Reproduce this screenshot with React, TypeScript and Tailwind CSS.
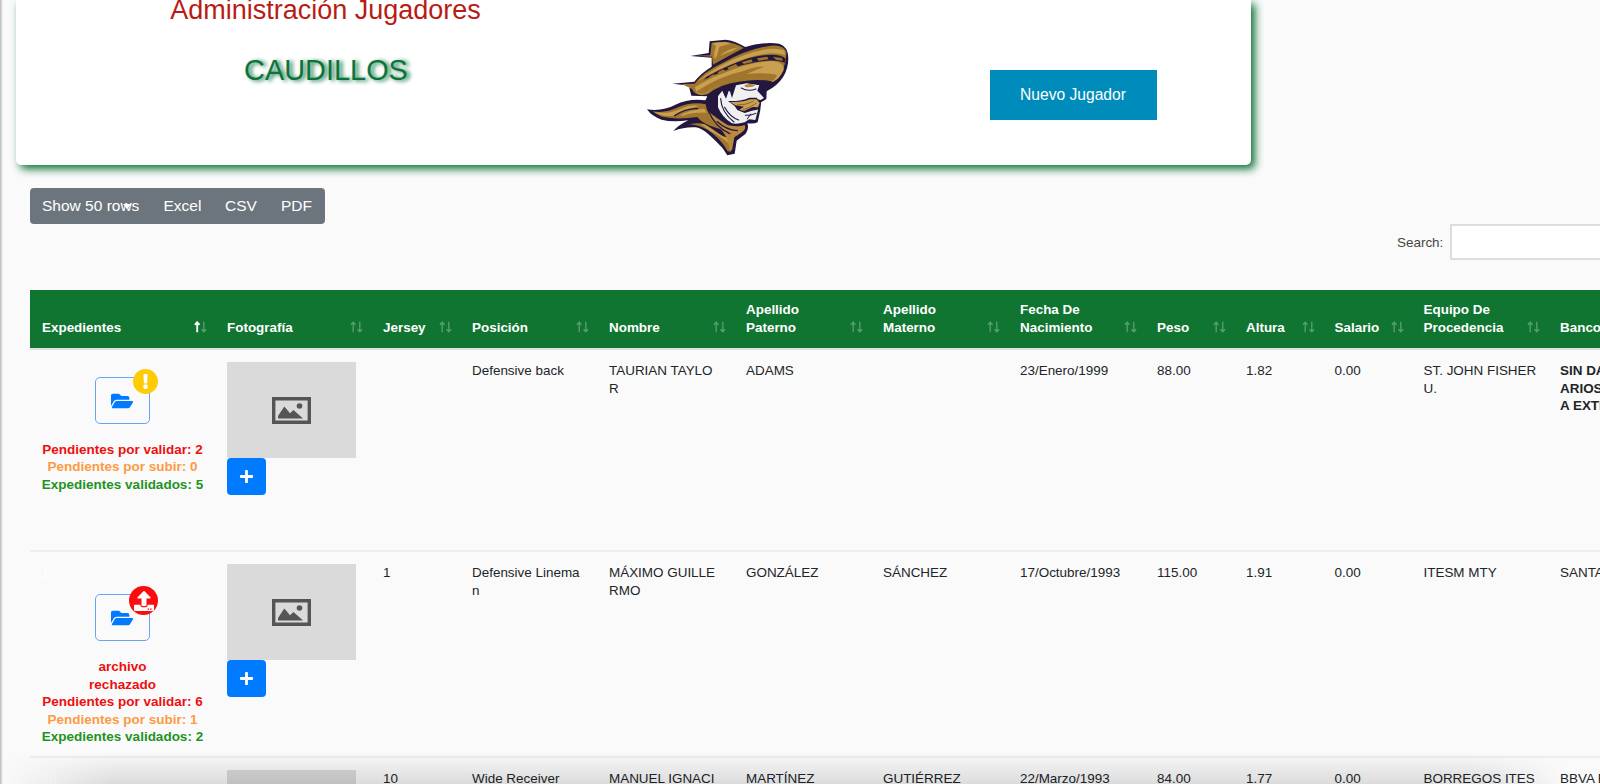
import { ReactNode } from "react";
import { FaExclamation, FaFolderOpen, FaPlus, FaUpload } from "react-icons/fa";

function SombreroLogo() {
  return (
    <svg viewBox="0 0 540 405" className="h-[135px] w-[180px] shrink-0">
      <g strokeLinejoin="round" strokeLinecap="round">
        <path
          fill="#24173f"
          d="M51 238 C85 243 112 236 136 224 C165 209 198 207 226 211 L234 199 L184 197 L178 175 L190 168 L127 161 L193 155 Q212 130 245 110 L245 83 L181 78 L236 69 L239 34 L287 29 Q314 32 346 51 Q398 35 448 41 Q474 49 475 84 Q475 150 410 184 L409 207 L393 217 L391 240 L383 277 Q373 282 352 280 Q358 296 347 311 L320 332 L314 371 L292 376 Q278 351 257 333 C234 310 216 295 197 292 Q164 290 130 303 Q144 286 175 271 Q126 277 95 269 Q65 259 51 238Z"
        />
        <path
          fill="#a0762c"
          d="M68 244 Q106 251 144 232 Q187 213 227 223 Q231 255 256 271 L294 302 Q280 301 240 287 Q214 277 202 261 Q145 269 106 262 Q83 258 68 244Z"
        />
        <path fill="#c9a04f" d="M73 246 Q116 254 153 236 Q181 223 207 227 Q162 241 132 257 Q98 262 73 246Z" />
        <path fill="#c9a04f" d="M150 256 Q182 238 223 236 L231 248 Q188 246 160 257Z" />
        <path fill="#a0762c" d="M178 283 Q202 277 224 282 Q264 307 303 337 L303 365 L293 364 Q272 325 234 300 Q203 284 178 283Z" />
        <path fill="#c9a04f" d="M210 281 Q235 285 262 310 Q280 322 304 325 L304 347 Q275 319 240 303 Q224 290 210 281Z" />
        <path fill="#b98a3b" d="M234 243 Q258 264 294 286 Q327 292 344 285 Q350 297 334 308 L313 322 L306 361 L298 360 Q298 318 260 286 Q240 271 234 243Z" />
        <path fill="none" stroke="#24173f" strokeWidth="4" d="M236 244 Q255 291 299 311 M262 275 Q288 299 322 302 M134 257 Q168 234 203 236" />
        <path
          fill="#f0f0f3"
          d="M264 198 L276 176 L286 202 L292 180 L303 186 L316 164 L350 158 L388 165 L382 182 L402 204 L392 210 L381 208 L386 220 L384 240 L376 270 L358 268 L344 277 Q320 284 306 280 Q276 262 264 232Z"
        />
        <path fill="#24173f" d="M228 212 Q232 182 262 164 L302 152 L410 150 L408 168 L398 182 L392 166 L350 160 L318 166 L306 204 L298 178 L288 206 L277 182 L262 200 L258 232 L240 226Z" />
        <path fill="#b98a3b" d="M343 166 Q358 159 376 165 Q368 174 346 171Z" />
        <path fill="none" stroke="#24173f" strokeWidth="3.5" d="M334 174 Q354 186 378 177 M272 206 Q274 246 312 276 M284 232 Q300 262 326 270" />
        <path fill="#24173f" d="M294 213 Q336 214 358 203 L380 203 L393 219 L388 238 L366 242 L344 249 L322 240 L314 228Z" />
        <path fill="#c9a04f" d="M300 216 Q337 218 360 208 L380 208 L389 219 L384 232 L368 231 L342 243 L328 239 L342 230 L316 226Z" />
        <path fill="none" stroke="#8e6524" strokeWidth="3" d="M322 225 Q348 226 370 214 M340 239 Q362 232 378 220" />
        <path fill="none" stroke="#24173f" strokeWidth="3" d="M346 256 Q362 258 378 250 M352 267 L362 252" />
        <path fill="#a0762c" d="M198 77 L241 76 L245 38 L286 35 Q318 39 341 54 L285 84 L249 104 L246 80Z" />
        <path fill="#c9a04f" d="M247 40 Q278 33 304 40 L268 50 L261 78 L254 88 L252 70 L258 48Z" />
        <path fill="#c9a04f" d="M270 78 Q290 57 326 52 L306 64 L288 70Z" />
        <path
          fill="#a0762c"
          d="M155 162 L194 161 Q220 125 279 98 Q354 56 422 47 Q461 43 469 66 Q471 119 430 155 Q387 145 326 155 Q270 162 233 193 Q198 202 186 177Z"
        />
        <path fill="#c9a04f" d="M195 172 Q236 144 285 128 Q361 95 431 93 Q465 99 461 120 Q449 148 427 156 Q414 142 326 146 Q263 156 229 190 Q199 201 195 172Z" />
        <path fill="#a0762c" d="M200 184 Q268 138 343 122 Q382 108 402 110 Q372 122 350 132 Q397 126 441 134 Q436 149 426 153 Q357 141 309 151 Q262 160 226 190 Q206 194 200 184Z" />
        <path fill="#c9a04f" d="M201 155 Q265 103 343 75 Q421 47 463 61 L465 76 Q422 60 345 86 Q267 114 201 155Z" />
        <path fill="#24173f" d="M230 140 Q332 85 390 77 Q448 68 467 86 L465 98 Q431 86 376 97 Q305 109 222 149Z" />
        <g fill="#a0762c">
          <path d="M236 141 L252 132 L256 137 L242 142Z" />
          <path d="M263 127 L280 118 L287 125 L269 132Z" />
          <path d="M292 113 L318 102 L324 110 L298 119Z" />
          <path d="M335 97 L364 88 L368 96 L342 102Z" />
          <path d="M381 85 L412 80 L415 88 L386 92Z" />
          <path d="M429 80 L455 84 L459 92 L438 89Z" />
        </g>
      </g>
    </svg>
  );
}

function ImagePlaceholder() {
  return (
    <div className="flex h-24 w-[129px] items-center justify-center bg-[#dadada]">
      <svg viewBox="0 0 39 27" className="h-[27px] w-[39px]">
        <path fill="none" stroke="#555" strokeWidth="3.4" d="M1.7 1.7H37.3V25.3H1.7Z" />
        <path fill="#555" d="M6 21.5V19L12.3 9.5L18 16.2L21.5 13L31 21.5Z" />
        <circle cx="27.5" cy="9" r="2.8" fill="#555" />
      </svg>
    </div>
  );
}

function SortArrows({ active }: { active?: boolean }) {
  return (
    <svg viewBox="0 0 13 12" className="mb-[3px] h-3 w-[13px] shrink-0" fill="none" strokeWidth="1.3">
      <path stroke={active ? "#fff" : "#5a9f70"} strokeWidth={active ? 1.8 : 1.3} d="M3.2 11.3V1.2M.9 3.8L3.2 1.2L5.5 3.8" />
      <path stroke="#5a9f70" d="M9.8 .7V10.8M7.5 8.2L9.8 10.8L12.1 8.2" />
    </svg>
  );
}

type Column = { label: ReactNode; width: string };

const columns: Column[] = [
  { label: "Expedientes", width: "w-[185px]" },
  { label: "Fotografía", width: "w-[156px]" },
  { label: "Jersey", width: "w-[89px]" },
  { label: "Posición", width: "w-[137px]" },
  { label: "Nombre", width: "w-[137px]" },
  { label: <>Apellido<br />Paterno</>, width: "w-[137px]" },
  { label: <>Apellido<br />Materno</>, width: "w-[137px]" },
  { label: <>Fecha De<br />Nacimiento</>, width: "w-[137px]" },
  { label: "Peso", width: "w-[89px]" },
  { label: "Altura", width: "w-[88.5px]" },
  { label: "Salario", width: "w-[89px]" },
  { label: <>Equipo De<br />Procedencia</>, width: "w-[136.5px]" },
  { label: "Banco", width: "w-[137px]" },
];

type Player = {
  height: string;
  order: string;
  rejected: boolean;
  pending: number;
  missing: number;
  valid: number;
  cells: ReactNode[];
};

const players: Player[] = [
  {
    height: "h-[202px]",
    order: "",
    rejected: false,
    pending: 2,
    missing: 0,
    valid: 5,
    cells: [
      "", "Defensive back", <>TAURIAN TAYLO<br />R</>, "ADAMS", "", "23/Enero/1999", "88.00", "1.82", "0.00",
      <>ST. JOHN FISHER<br />U.</>,
      <b>SIN DATOS BANC<br />ARIOS PARA PAGO<br />A EXTRANJEROS</b>,
    ],
  },
  {
    height: "h-[206px]",
    order: "1",
    rejected: true,
    pending: 6,
    missing: 1,
    valid: 2,
    cells: [
      "1", <>Defensive Linema<br />n</>, <>MÁXIMO GUILLE<br />RMO</>, "GONZÁLEZ", "SÁNCHEZ", "17/Octubre/1993",
      "115.00", "1.91", "0.00", "ITESM MTY", "SANTANDER",
    ],
  },
  {
    height: "h-[206px]",
    order: "10",
    rejected: false,
    pending: 0,
    missing: 0,
    valid: 7,
    cells: [
      "10", "Wide Receiver", <>MANUEL IGNACI<br />O</>, "MARTÍNEZ", "GUTIÉRREZ", "22/Marzo/1993", "84.00", "1.77",
      "0.00", <>BORREGOS ITES<br />M</>, "BBVA BANCOMER",
    ],
  },
];

function Files({ player }: { player: Player }) {
  return (
    <div className="flex w-[185px] shrink-0 flex-col px-3 pt-3">
      {player.order && <div className="-mb-[2px] text-white">{player.order}</div>}
      <div className="relative mx-auto mt-[15px] flex h-[47px] w-[55px] items-center justify-center rounded-[5px] border border-[#69a3f3]">
        <FaFolderOpen className="mr-px size-[22px] text-[#007bff]" />
        {player.rejected ? (
          <span className="absolute -top-[9px] -right-[9px] flex size-[29px] items-center justify-center rounded-full bg-[#fb0d0d] text-white">
            <FaUpload className="size-5" />
          </span>
        ) : (
          <span className="absolute -top-[9px] -right-[9px] flex size-[25px] items-center justify-center rounded-full bg-[#ffcb05] text-white">
            <FaExclamation className="size-[15px]" />
          </span>
        )}
      </div>
      <div className="mt-[17px] -mx-1 text-center text-[13.5px] font-bold whitespace-nowrap">
        {player.rejected && <div className="text-[#ee0f0f]">archivo<br />rechazado</div>}
        <div className="text-[#ee0f0f]">Pendientes por validar: {player.pending}</div>
        <div className="text-[#fb9b45]">Pendientes por subir: {player.missing}</div>
        <div className="text-[#1f931f]">Expedientes validados: {player.valid}</div>
      </div>
    </div>
  );
}

export default function App() {
  return (
    <div className="relative h-[784px] w-full overflow-hidden bg-[#fafafa] font-['Liberation_Sans',Arial,sans-serif] text-[13.45px] leading-[17.4px] text-[#212529]">
      <header className="ml-[15.5px] flex h-[165px] w-[1235.5px] rounded-b-[5px] bg-white shadow-[4px_4px_8px_#0b7338]">
        <div className="flex w-[614px] shrink-0 flex-col items-center">
          <h1 className="-mt-[5px] mr-[-6px] text-[27px] leading-[30px] whitespace-nowrap text-[#b81c14]">
            Administración Jugadores
          </h1>
          <h2 className="mt-[29px] mr-[-7px] text-[28.9px] leading-[32px] text-[#0b733c] [text-shadow:3px_1px_4px_#0b733c]">
            CAUDILLOS
          </h2>
        </div>
        <div className="w-[360px] shrink-0 pt-[30px]">
          <SombreroLogo />
        </div>
        <button className="mt-[70px] h-[50px] w-[167px] bg-[#008cba] text-[15.6px] text-white">Nuevo Jugador</button>
      </header>

      <div className="mt-[23px] ml-[30px] flex h-9 w-[295px] items-center rounded-[4px] bg-[#6c757d] text-[15.5px] text-white">
        <button className="relative w-[121.5px] pl-3 text-left">
          Show 50 rows
          <span className="absolute top-[7px] left-[93px] border-x-[4.5px] border-t-[5px] border-x-transparent border-t-white" />
        </button>
        <button className="w-[61.5px] pl-3 text-left">Excel</button>
        <button className="w-14 pl-3 text-left">CSV</button>
        <button className="pl-3 text-left">PDF</button>
      </div>

      <label className="ml-[1397px] flex w-[500px] items-center text-[#444]">
        <span className="w-[53px] pt-px">Search:</span>
        <input className="h-9 w-[200px] border-2 border-[#ddd] bg-white outline-none" />
      </label>

      <div className="mt-[30px] ml-[30px] w-[1655px]">
        <div className="flex h-[60px] items-end border-b-2 border-[#dee2e6] bg-[#107531] bg-clip-padding pb-3 font-bold text-white">
          {columns.map((c, i) => (
            <div key={i} className={`${c.width} flex shrink-0 items-end justify-between pr-2 pl-3`}>
              <span>{c.label}</span>
              <SortArrows active={i === 0} />
            </div>
          ))}
        </div>
        {players.map((p, i) => (
          <div key={i} className={`${p.height} flex border-b-2 border-[#eceeef]`}>
            <Files player={p} />
            <div className="w-[156px] shrink-0 px-3 pt-3">
              <ImagePlaceholder />
              <button className="flex h-[37px] w-[38.5px] items-center justify-center rounded-[4px] bg-[#007bff] text-white">
                <FaPlus className="size-[15px]" />
              </button>
            </div>
            {p.cells.map((cell, j) => (
              <div key={j} className={`${columns[j + 2].width} shrink-0 pt-[12.4px] pl-3 whitespace-nowrap`}>
                {cell}
              </div>
            ))}
          </div>
        ))}
      </div>

      <div className="absolute inset-y-0 left-0 w-[3px] bg-gradient-to-r from-[#b8b8b8] to-transparent" />
      <div className="absolute bottom-0 left-0 h-8 w-full bg-gradient-to-b from-transparent to-black/12 [mask-image:linear-gradient(to_right,transparent,black_7%,black_92%,transparent_98%)]" />
    </div>
  );
}
